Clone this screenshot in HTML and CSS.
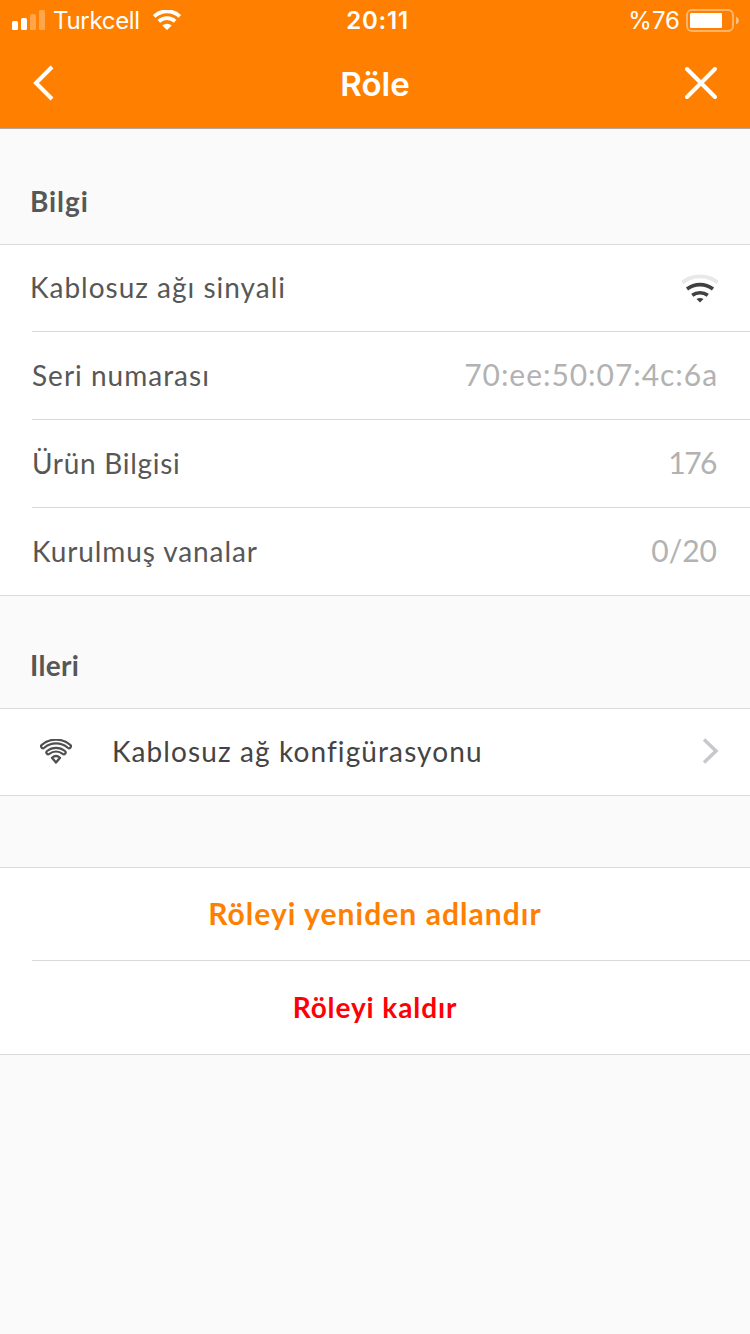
FILE: index.html
```html
<!DOCTYPE html>
<html lang="tr">
  <head>
    <meta charset="UTF-8" />
    <meta name="viewport" content="width=device-width, initial-scale=1" />
    <title>Röle</title>
    <link rel="stylesheet" href="styles.css">
  </head>
  <body>
    <header class="header">
      <div class="status-bar">
        <div class="carrier">
          <svg class="bars" width="33" height="20" viewBox="0 0 33 20" fill="#fff">
            <rect x="0" y="11" width="6" height="9" rx="1.5" />
            <rect x="9" y="8" width="6" height="12" rx="1.5" />
            <rect x="18" y="4" width="6" height="16" rx="1.5" opacity="0.3" />
            <rect x="27" y="0" width="6" height="20" rx="1.5" opacity="0.3" />
          </svg>
          <span class="carrier-name">Turkcell</span>
          <svg class="wifi" width="28" height="20" viewBox="0 0 28 20">
            <g fill="none" stroke="#fff" stroke-width="3.8">
              <path d="M1.2 6.4a18.6 18.6 0 0 1 25.6 0" />
              <path d="M5.9 11.4a11.8 11.8 0 0 1 16.2 0" />
            </g>
            <path d="M9.3 15.6a6.8 6.8 0 0 1 9.4 0L14 20z" fill="#fff" />
          </svg>
        </div>
        <span class="time">20:11</span>
        <div class="battery">
          <span class="percent">%76</span>
          <svg width="53" height="23" viewBox="0 0 53 23">
            <rect x="1" y="1" width="46" height="21" rx="5" fill="none" stroke="#fff" stroke-width="2" opacity="0.4" />
            <rect x="4" y="4" width="32" height="15" rx="1" fill="#fff" />
            <path d="M50 7.5q3 1.5 3 4t-3 4z" fill="#fff" opacity="0.5" />
          </svg>
        </div>
      </div>
      <nav class="nav-bar">
        <svg class="back" width="22" height="36" viewBox="0 0 22 36">
          <path d="M20 2L4 18l16 16" fill="none" stroke="#fff" stroke-width="4" />
        </svg>
        <h1>Röle</h1>
        <svg class="close" width="34" height="34" viewBox="0 0 34 34">
          <path d="M3 3l28 28M31 3L3 31" stroke="#fff" stroke-width="4" stroke-linecap="round" />
        </svg>
      </nav>
    </header>

    <main>
      <h2 class="section-title">Bilgi</h2>
      <ul class="list">
        <li class="row first">
          <span class="label signal-label">Kablosuz ağı sinyali</span>
          <svg class="signal" width="38" height="29" viewBox="0 0 38 29">
            <g fill="none" stroke="#414141" stroke-width="3.6">
              <path d="M1.2 8.5a29 29 0 0 1 35.6 0" stroke="#e8e8e8" />
              <path d="M6 15a21.500 21.500 0 0 1 26 0" />
              <path d="M11.2 21.3a13.500 13.500 0 0 1 15.6 0" />
            </g>
            <path d="M15.500 25q3.500-2 7 0L19 28.500z" fill="#414141" />
          </svg>
        </li>
        <li class="row">
          <span class="label serial-label">Seri numarası</span>
          <span class="value serial">70:ee:50:07:4c:6a</span>
        </li>
        <li class="row">
          <span class="label product-label">Ürün Bilgisi</span>
          <span class="value product">176</span>
        </li>
        <li class="row">
          <span class="label valves-label">Kurulmuş vanalar</span>
          <span class="value">0/20</span>
        </li>
      </ul>

      <h2 class="section-title advanced">Ileri</h2>
      <ul class="list">
        <li class="row first">
          <svg class="config" width="32" height="25" viewBox="0 0 32 25">
            <!-- each band is a dark arc with a thinner white arc on top -->
            <g fill="none" stroke="#505050" stroke-linecap="round">
              <path d="M3 7.3a20 20 0 0 1 26 0" stroke-width="6" />
              <path d="M3 7.3a20 20 0 0 1 26 0" stroke="#fff" stroke-width="1.7" />
              <path d="M8.2 13.4a12.5 12.5 0 0 1 15.6 0" stroke-width="5.8" />
              <path d="M8.2 13.4a12.5 12.5 0 0 1 15.6 0" stroke="#fff" stroke-width="1.5" />
            </g>
            <path d="M12 18.8q4-3.6 8 0L16 23.500z" fill="#fff" stroke="#505050" stroke-width="2.4" stroke-linejoin="round" />
          </svg>
          <span class="label config-label">Kablosuz ağ konfigürasyonu</span>
          <svg class="chevron" width="18" height="26" viewBox="0 0 18 26">
            <path d="M2 1.500L14 13 2 24.500" fill="none" stroke="#c7c7cc" stroke-width="3.5" />
          </svg>
        </li>
      </ul>

      <div class="actions">
        <button class="rename" type="button">Röleyi yeniden adlandır</button>
        <button class="remove" type="button">Röleyi kaldır</button>
      </div>
    </main>
  </body>
</html>
```
FILE: styles.css
```css
/* Reset and basic styles */
* {
  margin: 0;
  padding: 0;
  box-sizing: border-box;
}
body {
  font-family: Lato, "Open Sans", sans-serif;
  background: #fafafa;
  color: #575757;
  min-height: 100vh;
}
svg {
  display: block;
  flex-shrink: 0;
}

/* Header */
.header {
  height: 129px;
  background: #ff8000;
  border-bottom: 1px solid #b0a9a2;
  color: #fff;
  font-family: Inter, sans-serif;
}
.status-bar {
  display: grid;
  grid-template-columns: 1fr auto 1fr;
  align-items: center;
  height: 40px;
  padding: 0 11px 0 12px;
  font-size: 24px;
}
.carrier,
.battery {
  display: flex;
  align-items: center;
}
.carrier-name {
  margin: 1px 13px 0 8px;
  letter-spacing: -0.3px;
}
.time {
  margin: 1px 0 0 4px;
  font-weight: 600;
  letter-spacing: 0.8px;
}
.battery {
  justify-content: flex-end;
}
.percent {
  margin: 1px 6px 0 0;
}
.nav-bar {
  display: flex;
  align-items: center;
  justify-content: space-between;
  height: 86px;
  padding: 0 32px;
}
.nav-bar h1 {
  padding-top: 2px;
  font-size: 33px;
  font-weight: 600;
}
.back {
  margin-right: 12px;
}

/* Sections */
.section-title {
  height: 115px;
  padding: 55px 30px 0;
  font-size: 28px;
  font-weight: 700;
  letter-spacing: 0.9px;
  line-height: 34px;
}
.section-title.advanced {
  height: 112px;
  padding-top: 52px;
  letter-spacing: 0.3px;
}
.list {
  list-style: none;
  background: #fff;
  border-top: 1px solid #dadadc;
  border-bottom: 1px solid #dadadc;
}
.row {
  display: flex;
  align-items: center;
  justify-content: space-between;
  height: 88px;
  margin-left: 32px;
  padding-right: 32px;
  border-top: 1px solid #dadadc;
}
.row.first {
  height: 86px;
  border-top: none;
}
.label {
  padding-bottom: 2px;
  font-size: 28px;
  letter-spacing: 1px;
}
.signal-label {
  margin-left: -2px;
}
.product-label {
  letter-spacing: 0.7px;
}
.valves-label {
  letter-spacing: 0.9px;
}
.signal {
  margin-right: -1px;
}
.value {
  padding: 0 1px 4px 0;
  font-size: 30px;
  color: #b2b2b2;
}
.serial {
  margin-right: -1px;
  letter-spacing: 0.95px;
}
.product {
  letter-spacing: -1.5px;
  padding-right: 2px;
}
.config {
  margin: 0 40px 2px 8px;
}
.config-label {
  flex: 1;
  color: #444;
  letter-spacing: 1.1px;
}
.chevron {
  margin: 0 -2px 2px 0;
}

/* Buttons */
.actions {
  margin-top: 71px;
  background: #fff;
  border-top: 1px solid #dadadc;
  border-bottom: 1px solid #dadadc;
}
.actions button {
  display: block;
  width: 100%;
  height: 92px;
  padding-bottom: 2px;
  border: none;
  background: none;
  font-family: inherit;
  font-weight: 700;
}
.actions .rename {
  font-size: 30px;
  letter-spacing: 1.05px;
  color: #ff8000;
}
.actions .remove {
  width: calc(100% - 32px);
  height: 94px;
  margin-left: 32px;
  padding-right: 32px;
  border-top: 1px solid #dadadc;
  font-size: 28px;
  letter-spacing: 0.9px;
  color: #ff0006;
}
```
